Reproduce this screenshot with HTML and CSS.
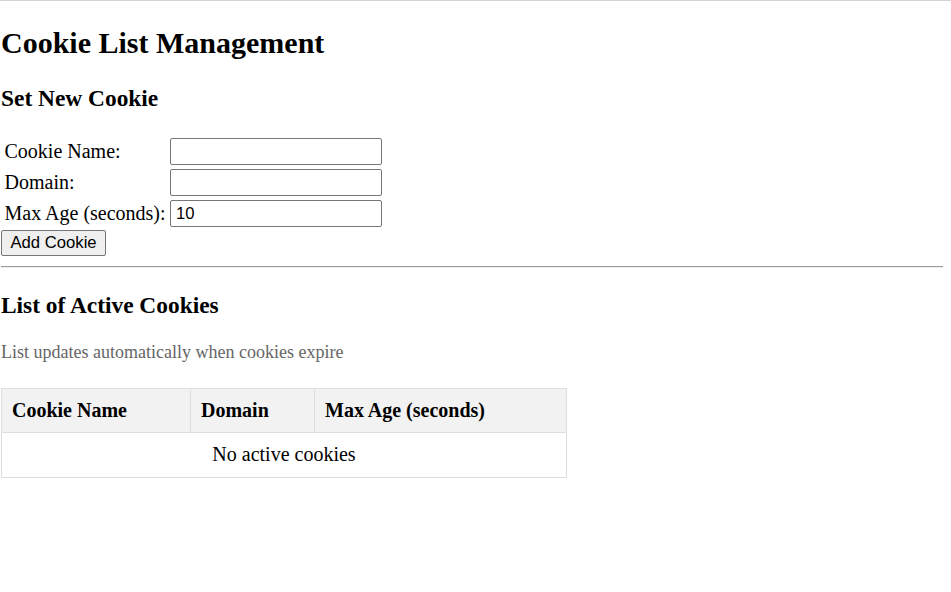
FILE: index.html
```html
<!DOCTYPE html>
<html>
<head>
<meta charset="utf-8">
<title>Cookie List Management</title>
<link rel="stylesheet" href="styles.css">
</head>
<body>
<h1>Cookie List Management</h1>
<h3>Set New Cookie</h3>
<form class="cookie-form">
  <table class="form-table">
    <tr><td><label for="name">Cookie Name:</label></td><td><input id="name" class="field" type="text"></td></tr>
    <tr><td><label for="domain">Domain:</label></td><td><input id="domain" class="field" type="text"></td></tr>
    <tr><td><label for="age">Max Age (seconds):</label></td><td><input id="age" class="field" type="text" value="10"></td></tr>
  </table>
  <button type="button" class="add-btn">Add Cookie</button>
</form>
<hr class="divider">
<h3>List of Active Cookies</h3>
<p class="note">List updates automatically when cookies expire</p>
<table class="cookie-table">
  <thead>
    <tr><th class="col-name">Cookie Name</th><th class="col-domain">Domain</th><th class="col-age">Max Age (seconds)</th></tr>
  </thead>
  <tbody>
    <tr><td colspan="3" class="empty">No active cookies</td></tr>
  </tbody>
</table>
</body>
</html>
```
FILE: styles.css
```css
html {
  border-top: 1px solid #d4d4d4;
}
body {
  margin: 0;
  padding: 0 8px 0 1px;
  font-family: "Liberation Serif", "Times New Roman", serif;
  font-size: 20px;
  color: #000;
  background: #fff;
}
h1 {
  font-size: 30px;
  margin: 24.9px 0;
}
h3 {
  font-size: 23.4px;
  margin: 23.4px 0;
}
.cookie-form {
  margin: 0;
}
.form-table {
  border-spacing: 2px;
}
.form-table td {
  padding: 1px 1px 1px 1.5px;
}
.field {
  box-sizing: border-box;
  width: 212px;
  height: 27px;
  padding: 1px 5px 0;
  font-family: "Liberation Sans", Arial, sans-serif;
  font-size: 16.67px;
  border: 1px solid #767676;
  border-radius: 2px;
  margin: 0;
  display: block;
}
.add-btn {
  display: block;
  box-sizing: border-box;
  height: 26px;
  font-family: "Liberation Sans", Arial, sans-serif;
  font-size: 16.67px;
  padding: 0 8.5px;
  margin: 0;
  background: #efefef;
  border: 1px solid #767676;
  border-radius: 2px;
  color: #000;
}
.divider {
  margin: 10px 0;
  border: 0;
  border-top: 1px solid #9a9a9a;
  border-bottom: 1px solid #eeeeee;
}
.note {
  font-size: 18px;
  color: #666;
  margin: 18px 0;
}
.cookie-table {
  width: 566px;
  border-collapse: collapse;
  margin-top: 25px;
}
.cookie-table th,
.cookie-table td {
  border: 1px solid #ddd;
  padding: 10px;
  text-align: left;
}
.cookie-table th {
  background: #f2f2f2;
}
.col-name {
  width: 168px;
}
.col-domain {
  width: 103px;
}
.cookie-table td.empty {
  text-align: center;
  padding: 10px 10px 11px;
}
```
